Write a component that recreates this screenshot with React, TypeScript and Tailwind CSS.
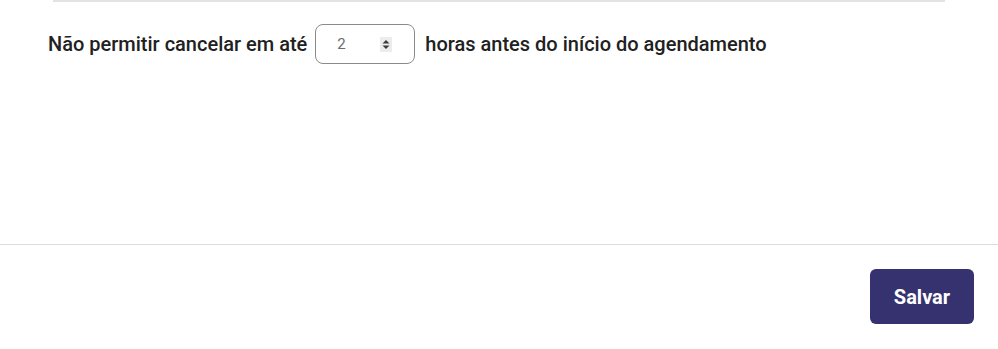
export default function App() {
  return (
    <div className="w-full h-[349px] bg-white flex flex-col font-['Roboto',sans-serif] text-[#212121]">
      {/* top divider from previous section */}
      <div className="mx-[53px] h-[2px] bg-[#e3e3e3] shrink-0" />

      {/* setting row */}
      <div className="flex items-center pl-[48px] pt-[22px]">
        <span className="text-[20px] font-medium">Não permitir cancelar em até</span>
        <div className="ml-2 flex items-center justify-between w-[100px] h-[40px] border border-[#8a8a8a] rounded-lg pl-[21px] pr-[22px]">
          <span className="text-[15px] text-[#6b6b6b]">2</span>
          <span className="flex items-center justify-center w-[12px] h-[15px] bg-[#ececec]">
            <svg width="8" height="11" viewBox="0 0 8 11">
              <path d="M4 1 L7.5 4.5 L0.5 4.5 Z" fill="#3a3a3a" />
              <path d="M4 10 L7.5 6.5 L0.5 6.5 Z" fill="#3a3a3a" />
            </svg>
          </span>
        </div>
        <span className="ml-[10px] text-[20px] font-medium">horas antes do início do agendamento</span>
      </div>

      <div className="flex-1" />

      {/* footer */}
      <div className="h-px bg-[#dcdcdc] shrink-0" />
      <div className="flex justify-end pt-[24px] pb-[25px] pr-[24px]">
        <button className="w-[104px] h-[55px] rounded-md bg-[#35326f] text-white text-[20px] font-bold">
          Salvar
        </button>
      </div>
    </div>
  );
}
